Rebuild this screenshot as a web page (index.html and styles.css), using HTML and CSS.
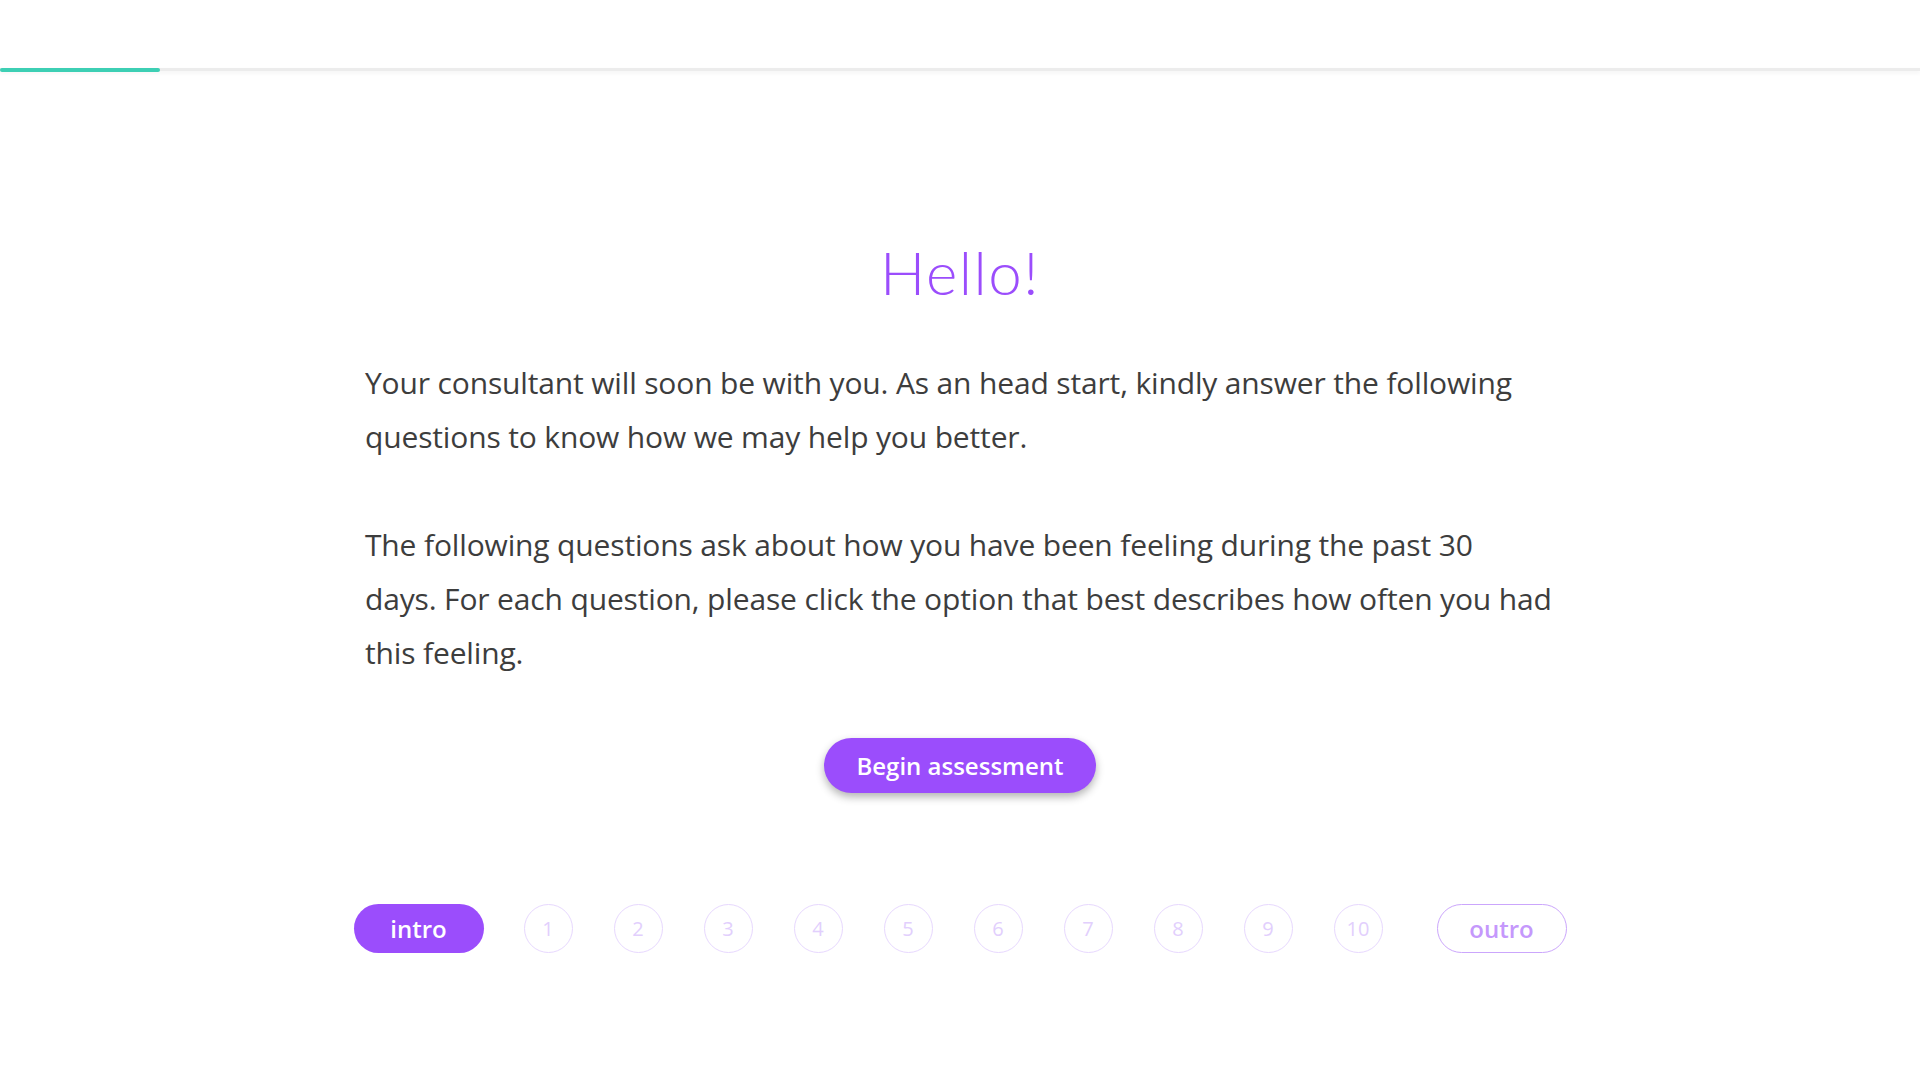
FILE: index.html
```html
<!DOCTYPE html>
<html lang="en">
<head>
<meta charset="utf-8">
<title>Assessment</title>
<link rel="stylesheet" href="styles.css">
</head>
<body>
<header class="topbar">
  <div class="track"><div class="fill" style="width:160px"></div></div>
</header>
<main class="content">
  <h1 class="title">Hello!</h1>
  <p class="para">Your consultant will soon be with you. As an head start, kindly answer the following questions to know how we may help you better.</p>
  <p class="para">The following questions ask about how you have been feeling during the past 30<br>days. For each question, please click the option that best describes how often you had this feeling.</p>
  <div class="actions"><button class="btn">Begin assessment</button></div>
</main>
<nav class="steps">
  <span class="pill pill-active">intro</span>
  <div class="circles">
    <span class="circle">1</span>
    <span class="circle">2</span>
    <span class="circle">3</span>
    <span class="circle">4</span>
    <span class="circle">5</span>
    <span class="circle">6</span>
    <span class="circle">7</span>
    <span class="circle">8</span>
    <span class="circle">9</span>
    <span class="circle">10</span>
  </div>
  <span class="pill pill-outline">outro</span>
</nav>
</body>
</html>
```
FILE: styles.css
```css
html, body {
  margin: 0;
  padding: 0;
  background: #ffffff;
}
body {
  font-family: "Open Sans", "Noto Sans", sans-serif;
  color: #3d3d3d;
}
.topbar {
  padding-top: 69px;
}
.track {
  height: 3px;
  background: #ececec;
  box-shadow: 0 2px 4px rgba(0, 0, 0, 0.06);
}
.fill {
  height: 4px;
  background: #3dcfb4;
  border-radius: 2px;
  margin-top: -1px;
}
.content {
  width: 1190px;
  margin: 0 auto;
}
.title {
  margin: 166px 0 0;
  font-family: "Lato", sans-serif;
  font-weight: 300;
  font-size: 60px;
  line-height: 70px;
  letter-spacing: 1.5px;
  color: #9b4dfc;
  text-align: center;
}
.para {
  margin: 49px -20px 0 0;
  font-size: 30px;
  line-height: 54px;
  letter-spacing: -0.15px;
}
.para + .para {
  margin-top: 54px;
}
.actions {
  display: flex;
  justify-content: center;
  margin-top: 58px;
}
.btn {
  height: 55px;
  padding: 0 32px;
  border: none;
  border-radius: 28px;
  background: #9b4dfc;
  color: #ffffff;
  font-family: "Open Sans", sans-serif;
  font-weight: 600;
  font-size: 24px;
  box-shadow: 0 4px 8px rgba(0, 0, 0, 0.3);
}
.steps {
  display: flex;
  justify-content: center;
  align-items: center;
  margin-top: 111px;
}
.circles {
  display: flex;
  gap: 41px;
  margin: 0 54px 0 40px;
}
.circle {
  box-sizing: border-box;
  width: 49px;
  height: 49px;
  border: 1px solid #e7d8fe;
  border-radius: 50%;
  display: flex;
  align-items: center;
  justify-content: center;
  font-size: 20px;
  color: #e2cffd;
}
.pill {
  box-sizing: border-box;
  width: 130px;
  height: 49px;
  border-radius: 25px;
  display: flex;
  align-items: center;
  justify-content: center;
  font-weight: 600;
  font-size: 24px;
}
.pill-active {
  background: #9b4dfc;
  color: #ffffff;
}
.pill-outline {
  border: 1px solid #cba6fc;
  color: #c598fc;
}
```
